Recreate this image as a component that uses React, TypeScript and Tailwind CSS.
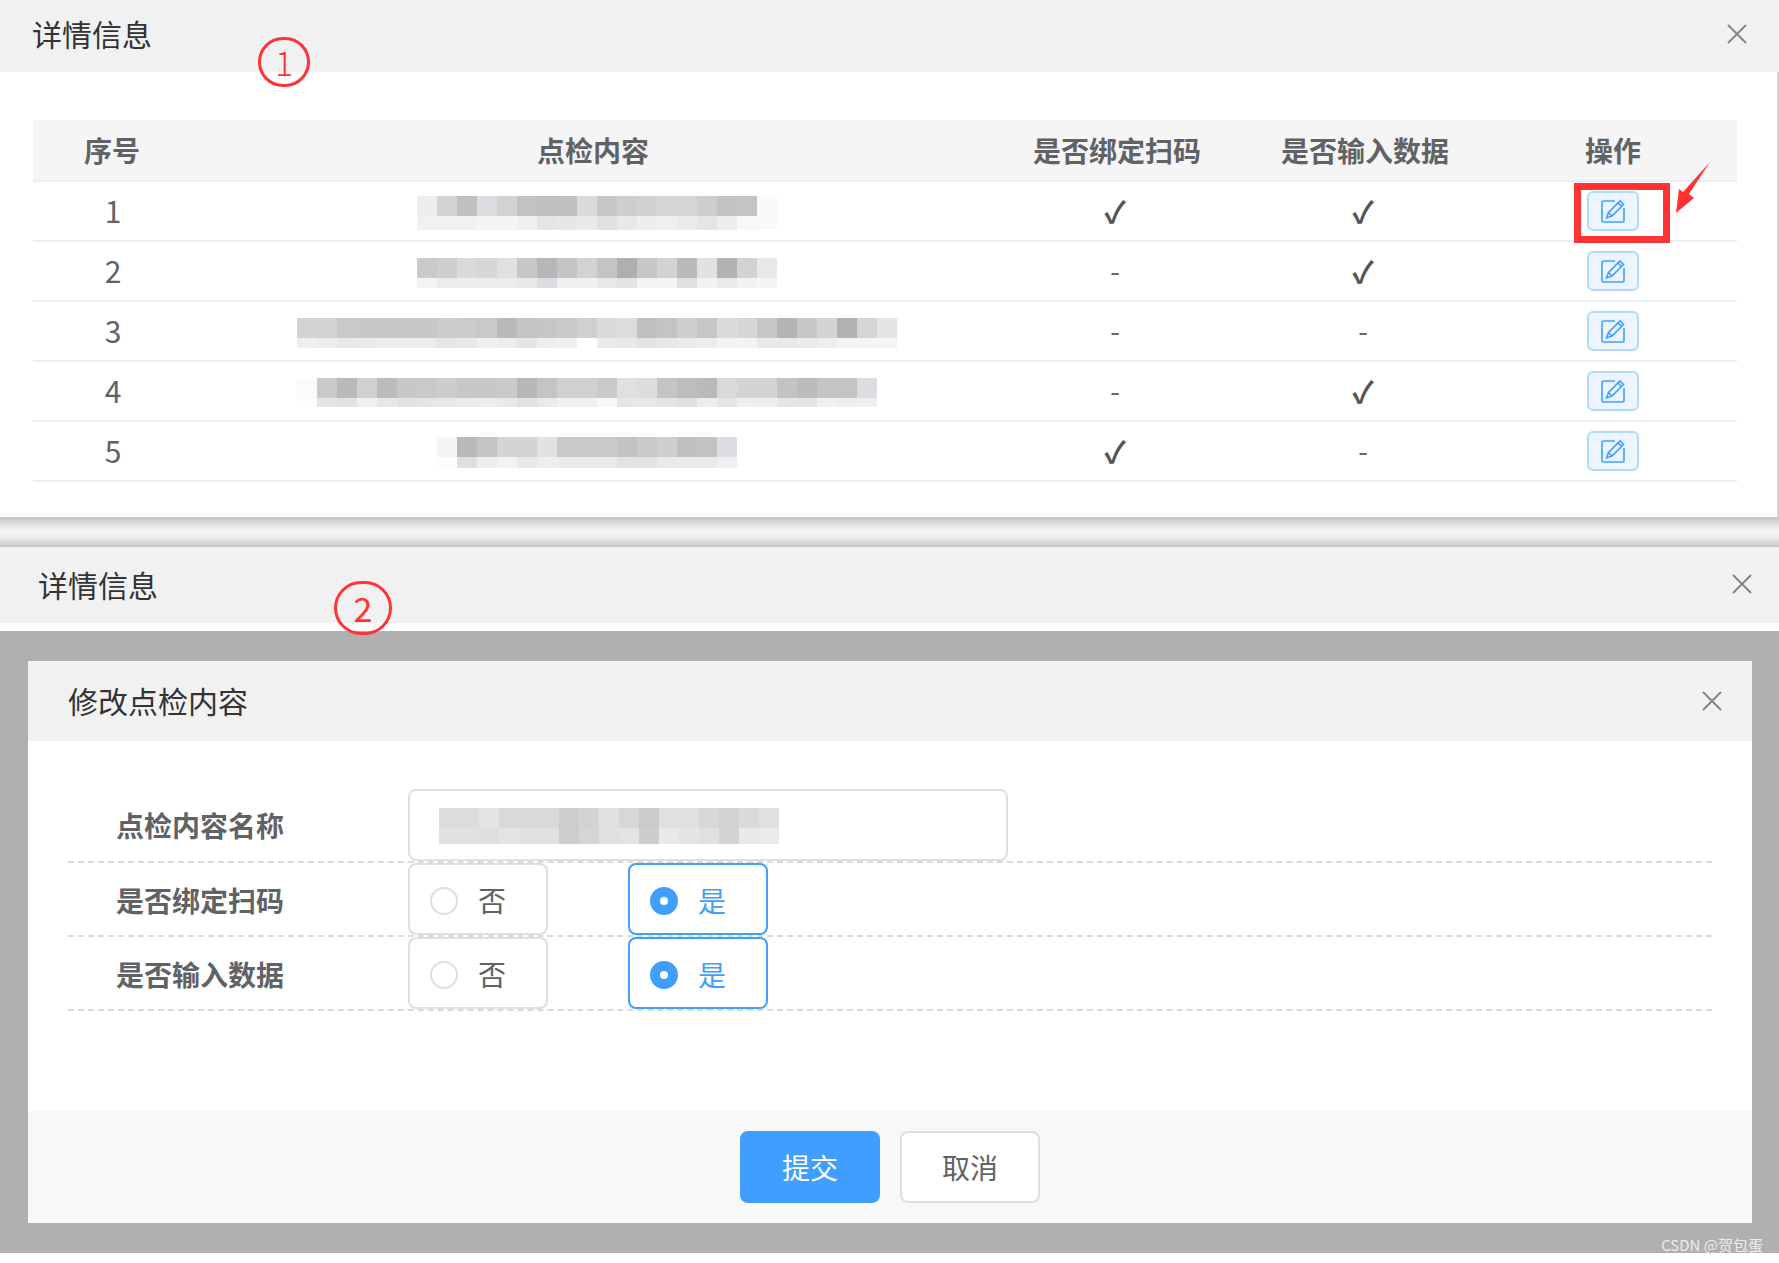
const font = "font-['Noto_Sans_CJK_SC','Noto_Sans',sans-serif]";

interface MosaicData {
  offset: number;
  top: string[];
  bottom: string[];
  bottomHeight?: number;
}

const rows: { no: number; scan: boolean; input: boolean; mosaic: MosaicData }[] = [
  {
    no: 1,
    scan: true,
    input: true,
    mosaic: {
      offset: 226,
      top: "eeeeee,d2d3d5,bfc0c2,dcdde0,d2d2d2,c2c3c5,bfc0c2,c0c1c3,dadada,c6c7c9,cdced0,d0d1d3,d5d5d6,d5d5d5,cdcecf,c2c3c5,c3c4c6,fafafa".split(","),
      bottom: "f1f1f1,f0f1f1,f1f1f1,f4f4f4,f5f5f5,f0f0f0,e4e5e5,e7e7e7,e9e9e9,e0e1e1,e8e8e8,eeeeee,f0f0f0,ebebeb,e4e6e4,ededed,f8f8f8,f9f9f9".split(","),
      bottomHeight: 14,
    },
  },
  {
    no: 2,
    scan: false,
    input: true,
    mosaic: {
      offset: 226,
      top: "c9cacc,cfcfcf,dadadc,d5d6d8,dfe0e0,c5c6c8,b6b7b9,c3c4c6,d1d2d4,c3c4c6,aeafb1,c5c6c8,d2d3d5,b9babc,e2e2e2,b1b2b4,d2d2d2,e8e8e8".split(","),
      bottom: "f3f3f3,ececec,eeeeee,eeeeee,ececec,e8e9e9,dcdde0,f0f0f0,f0f0f0,e8e8e8,e3e4e4,f4f4f4,f4f4f4,dfe0e2,f2f2f2,ebebeb,f2f2f2,f5f5f5".split(","),
    },
  },
  {
    no: 3,
    scan: false,
    input: false,
    mosaic: {
      offset: 106,
      top: "d2d3d5,d2d3d5,c8c9cb,c8c8c8,c8c8c8,c8c8c8,c8c8c8,cdcdcd,cbcbcb,c8c9cb,b8b9bb,c3c4c6,c5c6c8,c8c9cb,d0d0d0,d9dadc,dcdcdc,bfc0c2,c3c4c6,cfcfcf,c5c6c8,dadbdd,d5d6d8,c6c7c9,b3b4b6,c6c7c9,d3d4d6,b1b2b4,d5d5d5,e4e4e4".split(","),
      bottom: "efefef,ebecec,e9e9e9,ebebeb,ececec,ededed,ececec,e6e6e6,e8e8e8,f0f0f0,ededed,e4e5e5,eeeeee,f0f0f0,ffffff,ebebeb,e9e9e9,e3e4e6,e6e8e8,ebebeb,ededed,f3f3f3,f3f3f3,e8e9e9,e9e9e9,ebebeb,eeeeee,f3f3f3,f5f5f5,f5f5f5".split(","),
    },
  },
  {
    no: 4,
    scan: false,
    input: true,
    mosaic: {
      offset: 106,
      top: "fbfbfb,cacaca,b9babc,d0d0d0,bbbcbe,c6c7c9,c8c9cb,cccdcf,c6c7c9,c6c7c9,c9cacc,b6b7b9,c3c4c6,cfd0d2,d0d0d0,c8c9cb,e0e0e0,dcdedc,c3c4c6,bcbdbf,b9babc,d8d9db,d3d4d6,d3d4d6,c2c3c5,bbbcbe,c3c4c6,c3c4c6,dcdde0".split(","),
      bottom: "fdfdfd,e4e5e5,e2e3e3,f0f0f0,e8e8e8,e2e2e2,e6e6e6,e8e8e8,eaeaea,ececec,e8eaea,e0e1e1,eaeaea,f0f0f0,f0f0f0,f7f7f7,e6e6e6,e8e8e8,e4e4e4,e0e0e0,ededed,e6e6e6,efefef,ededed,e6e6e6,e3e4e4,f0f0f0,ededed,efefef".split(","),
      bottomHeight: 9,
    },
  },
  {
    no: 5,
    scan: true,
    input: false,
    mosaic: {
      offset: 246,
      top: "f5f5f5,b8b9bb,c3c4c6,d3d4d6,d3d4d6,e2e2e2,c8c9cb,c8c9cb,c8c9cb,c2c3c5,c8c9cb,cdced0,bfc0c2,c2c3c5,dcdde0".split(","),
      bottom: "fdfdfd,dfdfdf,ededed,f2f2f2,e8e8e8,eeeeee,ebebeb,ebebeb,eaeaea,e3e3e3,e3e3e3,eaeaea,eaeaea,eaeaea,efefef".split(","),
      bottomHeight: 11,
    },
  },
];

const formMosaic: MosaicData = {
  offset: 0,
  top: "dcdcdc,dcdcdc,e2e3e3,d8d9da,d8d9da,d8d9da,cdced0,d2d3d5,e0e1e3,d6d7d7,cacbcd,dfe0e2,dfe0e2,d8d8d9,d2d2d3,dadada,e0e0e0".split(","),
  bottom: "e2e2e2,e2e2e2,dfdfdf,e4e4e4,e0e1e1,e0e0e1,cdced0,d4d5d6,e0e0e1,e2e3e3,cccdcf,e9e9ea,e4e4e5,e0e0e1,d2d3d5,e9e9e9,ebebeb".split(","),
  bottomHeight: 16,
};

function Mosaic({ data }: { data: MosaicData }) {
  return (
    <div className="flex" style={{ marginLeft: data.offset }}>
      {data.top.map((color, i) => (
        <div key={i} className="w-5">
          <div className="h-5" style={{ backgroundColor: `#${color}` }} />
          <div style={{ backgroundColor: `#${data.bottom[i]}`, height: data.bottomHeight ?? 10 }} />
        </div>
      ))}
    </div>
  );
}

function CloseIcon() {
  return (
    <svg width="20" height="20" viewBox="0 0 20 20" fill="none" stroke="#808287" strokeWidth="1.8">
      <path d="M1 1l18 18M19 1L1 19" />
    </svg>
  );
}

function EditIcon() {
  return (
    <svg width="26" height="26" viewBox="0 0 26 26" fill="none" stroke="#409eff" strokeWidth="1.6">
      <path d="M15 3H3.500A1.500 1.500 0 0 0 2 4.500V22.500A1.500 1.500 0 0 0 3.500 24H22.500A1.500 1.500 0 0 0 24 22.500V10" />
      <path d="M6.500 20l2-5.500L20 3l3.500 3.500L12 18z" />
      <path d="M8.500 14.500l3.500 3.500M18 5l3.500 3.500" />
    </svg>
  );
}

function Mark({ on }: { on: boolean }) {
  return on ? (
    <span className="text-[30px] font-bold leading-none text-[#555]">✓</span>
  ) : (
    <span className="relative -top-px text-[#666]">-</span>
  );
}

function Radio({ label, checked }: { label: string; checked?: boolean }) {
  return (
    <div
      className={`flex h-[72px] w-[140px] items-center rounded-[8px] border-2 pl-5 pt-[3px] ${
        checked ? "border-[#409eff] text-[#409eff]" : "border-[#dcdfe6] text-[#606266]"
      }`}
    >
      {checked ? (
        <span className="flex h-7 w-7 items-center justify-center rounded-full bg-[#409eff]">
          <span className="h-2 w-2 rounded-full bg-white" />
        </span>
      ) : (
        <span className="h-7 w-7 rounded-full border-2 border-[#dcdfe6] bg-white" />
      )}
      <span className="ml-5 pb-[2px] text-[28px] leading-none">{label}</span>
    </div>
  );
}

function ChoiceRow({ label }: { label: string }) {
  return (
    <div className="flex h-[74px] items-center border-b-2 border-dashed border-[#d9d9d9]">
      <div className="w-[340px] pl-12 pt-px text-[28px] font-bold text-[#606266]">{label}</div>
      <div className="flex gap-[80px]">
        <Radio label="否" />
        <Radio label="是" checked />
      </div>
    </div>
  );
}

const gridCols = "grid-cols-[158px_802px_244px_252px_248px]";

export default function App() {
  return (
    <div className={`relative h-[1263px] w-[1779px] overflow-hidden bg-white ${font}`}>
      {/* first dialog */}
      <div className="flex h-[72px] items-center justify-between bg-[#f1f1f1] pb-[5px] pl-8 pr-[32px]">
        <span className="text-[30px] text-[#333]">详情信息</span>
        <CloseIcon />
      </div>
      <div className="h-[445px] border-r-2 border-[#d5d5d5] pl-[33px] pr-10 pt-12">
        <div className={`grid h-[62px] ${gridCols} items-center border-b-2 border-[#ebeef5] bg-[#f5f5f5] text-center text-[28px] font-bold text-[#606266]`}>
          <div>序号</div>
          <div className="pl-[2px]">点检内容</div>
          <div className="pl-[4px]">是否绑定扫码</div>
          <div className="pl-[4px]">是否输入数据</div>
          <div>操作</div>
        </div>
        {rows.map((row) => (
          <div key={row.no} className={`grid h-[60px] ${gridCols} items-center border-b-2 border-[#ebeef5] text-center text-[28px] text-[#606266]`}>
            <div className="relative -top-px pl-[2px] text-[30px]">{row.no}</div>
            <div className="flex pt-[3px]">
              <Mosaic data={row.mosaic} />
            </div>
            <div>
              <Mark on={row.scan} />
            </div>
            <div>
              <Mark on={row.input} />
            </div>
            <div className="flex justify-center">
              <button className="flex h-10 w-[52px] items-center justify-center rounded-[6px] border-2 border-[#b3d8ff] bg-[#ecf5ff]">
                <EditIcon />
              </button>
            </div>
          </div>
        ))}
      </div>

      {/* gap between the two captures */}
      <div className="h-[30px] bg-[linear-gradient(to_bottom,#c4c4c4,#ececec_35%,#f6f6f6_50%,#ececec_70%,#c4c4c4)]" />

      {/* second dialog */}
      <div className="flex h-[76px] items-center justify-between bg-[#f1f1f1] pb-[2px] pl-[38px] pr-[27px]">
        <span className="text-[30px] text-[#333]">详情信息</span>
        <CloseIcon />
      </div>
      <div className="h-2 bg-white" />
      <div className="h-[622px] bg-[#b0b0b0] pb-[30px] pl-7 pr-[27px] pt-[30px]">
        <div className="flex h-full flex-col bg-white">
          <div className="flex h-20 items-center justify-between bg-[#f1f1f1] pl-10 pr-[30px]">
            <span className="pb-[2px] text-[30px] text-[#333]">修改点检内容</span>
            <CloseIcon />
          </div>
          <div className="flex-1 px-10 pt-12">
            <div className="flex h-[74px] items-start border-b-2 border-dashed border-[#d9d9d9]">
              <div className="flex h-[72px] w-[340px] items-center pl-12 text-[28px] font-bold text-[#606266]">点检内容名称</div>
              <div className="flex h-[72px] w-[600px] items-start rounded-[8px] border-2 border-[#dcdfe6] pl-[29px] pt-[17px]">
                <Mosaic data={formMosaic} />
              </div>
            </div>
            <ChoiceRow label="是否绑定扫码" />
            <ChoiceRow label="是否输入数据" />
          </div>
          <div className="flex h-[112px] items-center justify-center gap-5 bg-[#f8f8f8]">
            <button className="h-[72px] w-[140px] rounded-[8px] bg-[#409eff] text-[28px] text-white">提交</button>
            <button className="h-[72px] w-[140px] rounded-[8px] border-2 border-[#dcdfe6] bg-white text-[28px] text-[#606266]">取消</button>
          </div>
        </div>
      </div>

      {/* red annotations */}
      <div className="absolute left-[258px] top-[37px] flex h-[50px] w-[52px] items-center justify-center rounded-full border-[3px] border-[#f33] text-[34px] font-light leading-none text-[#f33]">1</div>
      <div className="absolute left-[334px] top-[581px] flex h-[54px] w-[58px] items-center justify-center rounded-full border-[3px] border-[#f33] text-[34px] leading-none text-[#f33]">2</div>
      <div className="absolute left-[1574px] top-[183px] h-[60px] w-[96px] border-[7px] border-[#f33]" />
      <svg className="absolute left-[1670px] top-[158px]" width="44" height="60" viewBox="0 0 44 60">
        <path d="M40 4L19 36l5 4-18 15 3-24 4 3z" fill="#f33" />
      </svg>
      <div className="absolute bottom-[11px] right-[16px] text-[15px] leading-none text-[#ececec]">CSDN @贺包蛋</div>
    </div>
  );
}
